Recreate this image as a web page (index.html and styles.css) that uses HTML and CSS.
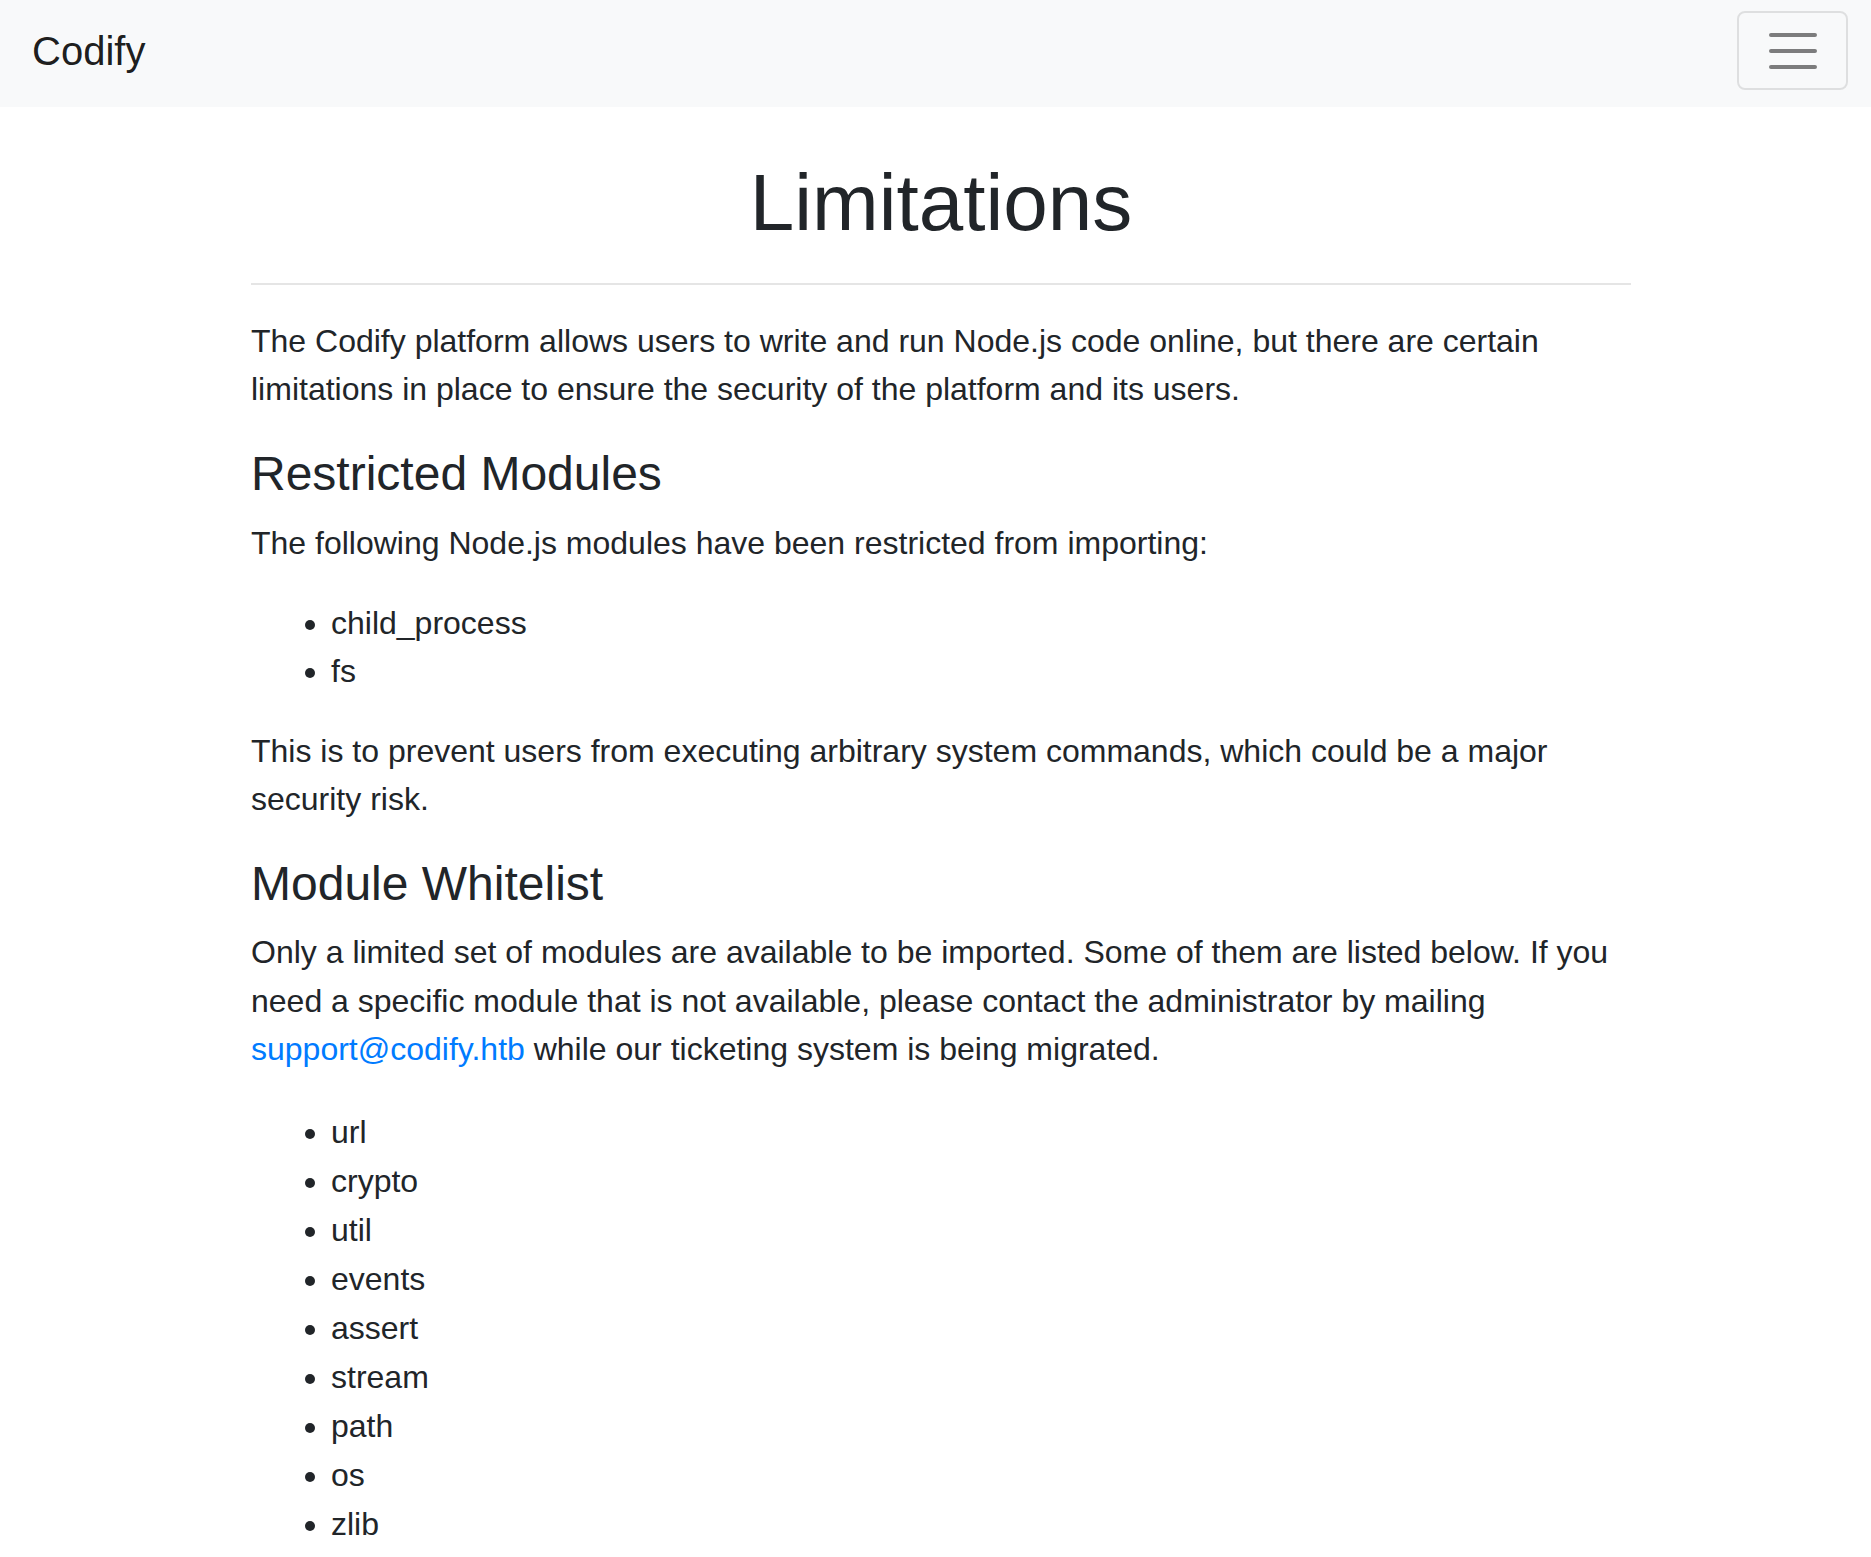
FILE: index.html
```html
<!DOCTYPE html>
<html lang="en">
<head>
<meta charset="utf-8">
<title>Codify - Limitations</title>
<link rel="stylesheet" href="styles.css">
</head>
<body>
<nav class="navbar">
  <a class="brand" href="#">Codify</a>
  <button class="toggler" type="button" aria-label="Toggle navigation">
    <svg class="toggler-icon" width="60" height="60" viewBox="0 0 30 30" xmlns="http://www.w3.org/2000/svg">
      <path stroke="rgba(0,0,0,0.5)" stroke-linecap="round" stroke-miterlimit="10" stroke-width="2" d="M4 7h22M4 15h22M4 23h22"/>
    </svg>
  </button>
</nav>
<div class="page">
  <main class="container">
    <h1 class="title">Limitations</h1>
    <hr class="rule">
    <p class="text">The Codify platform allows users to write and run Node.js code online, but there are certain limitations in place to ensure the security of the platform and its users.</p>
    <h4 class="section">Restricted Modules</h4>
    <p class="text">The following Node.js modules have been restricted from importing:</p>
    <ul class="list">
      <li>child_process</li>
      <li>fs</li>
    </ul>
    <p class="text">This is to prevent users from executing arbitrary system commands, which could be a major security risk.</p>
    <h4 class="section">Module Whitelist</h4>
    <p class="text text-last">Only a limited set of modules are available to be imported. Some of them are listed below. If you need a specific module that is not available, please contact the administrator by mailing <a class="link" href="mailto:support@codify.htb">support@codify.htb</a> while our ticketing system is being migrated.</p>
    <ul class="list list-wide">
      <li>url</li>
      <li>crypto</li>
      <li>util</li>
      <li>events</li>
      <li>assert</li>
      <li>stream</li>
      <li>path</li>
      <li>os</li>
      <li>zlib</li>
    </ul>
  </main>
</div>
</body>
</html>
```
FILE: styles.css
```css
html, body {
  margin: 0;
  padding: 0;
  background: #fff;
}
body {
  font-family: "Liberation Sans", Arial, sans-serif;
  font-size: 32px;
  line-height: 48px;
  color: #212529;
}
.navbar {
  box-sizing: border-box;
  height: 107px;
  padding: 11px 23px 0 32px;
  background: #f8f9fa;
  display: flex;
  justify-content: space-between;
  align-items: flex-start;
}
.brand {
  display: block;
  margin-top: 10px;
  font-size: 40px;
  line-height: 60px;
  color: rgba(0, 0, 0, 0.9);
  text-decoration: none;
}
.toggler {
  box-sizing: border-box;
  width: 111px;
  height: 79px;
  padding: 0;
  border: 2px solid rgba(0, 0, 0, 0.1);
  border-radius: 8px;
  background: transparent;
  display: flex;
  align-items: center;
  justify-content: center;
}
.toggler-icon {
  display: block;
}
.page {
  padding-left: 11px;
}
.container {
  width: 1380px;
  margin: 0 auto;
}
.title {
  margin: 48px 0 16px;
  font-size: 80px;
  line-height: 1.2;
  font-weight: 400;
  text-align: center;
}
.rule {
  margin: 32px 0;
  height: 0;
  border: 0;
  border-top: 2px solid rgba(0, 0, 0, 0.1);
}
.text {
  margin: 0 0 32px;
}
.text-last {
  line-height: 48.5px;
  margin-bottom: 34px;
}
.section {
  margin: 0 0 16px;
  font-size: 48px;
  line-height: 1.2;
  font-weight: 400;
}
.list {
  margin: 0 0 32px;
  padding-left: 80px;
}
.list-wide li {
  line-height: 49px;
}
.link {
  color: #007bff;
  text-decoration: none;
}
```
